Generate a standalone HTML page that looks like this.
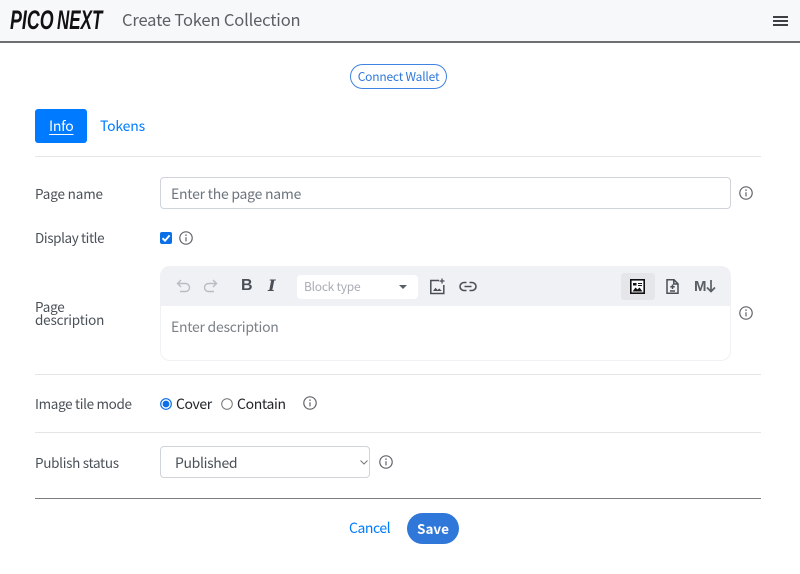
<!DOCTYPE html>
<html><head><meta charset="utf-8"><style>
html,body{margin:0;padding:0;background:#fff}
body{width:800px;height:574px;position:relative;overflow:hidden;font-family:"Noto Sans CJK JP","Liberation Sans",sans-serif;font-size:14px;color:#495057}
.a{position:absolute;white-space:nowrap;line-height:20px}
.hr{position:absolute;left:35px;width:726px;height:1px;background:#e4e5e7}
svg{position:absolute;overflow:visible}
.i{width:14px;height:14px;fill:none;stroke:#5f6368;stroke-width:1.2}
.t{fill:none;stroke:#4a4f57;stroke-width:1.5}
</style></head><body>
<div style="position:absolute;left:0;top:0;width:800px;height:41px;background:#f7f8fa"></div>
<div style="position:absolute;left:0;top:41px;width:800px;height:2px;background:#6d6f72"></div>
<div class="a" style="left:10px;top:8px;font:italic 700 27px/24px 'Liberation Sans',sans-serif;color:#111;transform-origin:0 50%;transform:scaleX(.66)">PICO</div>
<div class="a" style="left:57px;top:8px;font:italic 700 27px/24px 'Liberation Sans',sans-serif;color:#111;transform-origin:0 50%;transform:scaleX(.63)">NEXT</div>
<div class="a" style="left:122px;top:8px;font-size:16.5px;line-height:22px;color:#5b5f64;letter-spacing:-.15px">Create Token Collection</div>
<div style="position:absolute;left:773px;top:16px;width:15px;height:2px;background:#3d3f42"></div>
<div style="position:absolute;left:773px;top:20px;width:15px;height:2px;background:#3d3f42"></div>
<div style="position:absolute;left:773px;top:24px;width:15px;height:2px;background:#3d3f42"></div>

<div class="a" style="left:350px;top:64px;width:95px;height:23px;border:1px solid #3f84e0;border-radius:13px;text-align:center;font-size:12px;line-height:23px;color:#2e77d8;letter-spacing:-.2px">Connect Wallet</div>

<div style="position:absolute;left:35px;top:109px;width:52px;height:34px;background:#007bff;border-radius:3px"></div>
<div class="a" style="left:49px;top:116px;color:#fff;text-decoration:underline;text-underline-offset:3px;letter-spacing:-.25px">Info</div>
<div class="a" style="left:100px;top:116px;color:#007bff;letter-spacing:-.2px">Tokens</div>
<div class="hr" style="top:156px"></div>

<div class="a" style="left:35px;top:183px;font-size:13.5px;letter-spacing:-.15px">Page name</div>
<div style="position:absolute;left:160px;top:177px;width:569px;height:30px;border:1px solid #ced4da;border-radius:4px"></div>
<div class="a" style="left:171px;top:184px;color:#6c757d;letter-spacing:-.25px">Enter the page name</div>
<svg class="i" style="left:739px;top:186px" viewBox="0 0 14 14"><circle cx="7" cy="7" r="6.2"/><path d="M7 6.2V10.4M7 3.4V5"/></svg>

<div class="a" style="left:35px;top:227px;font-size:13.5px;letter-spacing:-.4px">Display title</div>
<svg style="left:160px;top:232px;width:12px;height:12px" viewBox="0 0 12 12"><rect width="12" height="12" rx="2" fill="#0b6fe8"/><path d="M2.5 6.2L5 8.7 9.6 3.4" fill="none" stroke="#fff" stroke-width="1.9"/></svg>
<svg class="i" style="left:179px;top:231px" viewBox="0 0 14 14"><circle cx="7" cy="7" r="6.2"/><path d="M7 6.2V10.4M7 3.4V5"/></svg>

<div class="a" style="left:35px;top:300px;font-size:13.5px;line-height:13px;letter-spacing:-.2px">Page<br>description</div>
<div style="position:absolute;left:160px;top:266px;width:569px;height:93px;border:1px solid #f0f1f4;border-radius:10px"></div>
<div style="position:absolute;left:160px;top:266px;width:571px;height:40px;background:#f0f1f5;border-radius:10px 10px 0 0"></div>
<svg style="left:176px;top:279px;width:15px;height:14px" viewBox="0 0 15 14" fill="none" stroke="#b9bcc2" stroke-width="1.4"><path d="M5 1L1.5 4.5 5 8M1.5 4.5H9.5a3.6 3.6 0 0 1 0 8H4"/></svg>
<svg style="left:203px;top:279px;width:15px;height:14px" viewBox="0 0 15 14" fill="none" stroke="#b9bcc2" stroke-width="1.4"><path d="M10 1L13.5 4.5 10 8M13.5 4.5H5.500a3.600 3.600 0 0 0 0 8H11"/></svg>
<div class="a" style="left:241px;top:276px;font:700 16px/20px 'Liberation Sans',sans-serif;color:#4a4f57">B</div>
<div class="a" style="left:268px;top:276px;font:italic 700 16px/20px 'DejaVu Serif',serif;color:#4a4f57">I</div>
<div style="position:absolute;left:297px;top:275px;width:121px;height:24px;background:#fff;border-radius:4px"></div>
<div class="a" style="left:304px;top:277px;font-size:12px;color:#a9adb3;letter-spacing:-.25px">Block type</div>
<div style="position:absolute;left:399px;top:285px;border:4px solid transparent;border-top-color:#5a5f66;border-bottom:0"></div>
<svg class="t" style="left:429px;top:278px;width:17px;height:17px" viewBox="0 0 17 17"><path d="M10 2.500H1.800V15.500H14.800V7"/><path d="M13 .5V5.500M10.500 3H15.500" stroke-width="1.300"/><path d="M4 13L6.500 9.800 8.500 12 10.200 10.500 12.800 13Z" fill="#4a4f57" stroke="none"/></svg>
<svg class="t" style="left:459px;top:281px;width:18px;height:11px" viewBox="0 0 18 11"><path d="M7.500 1.500H5a4 4 0 0 0 0 8H7.500M10.500 1.500H13a4 4 0 0 1 0 8H10.500M5.500 5.500H12.500" stroke-width="1.600"/></svg>
<div style="position:absolute;left:621px;top:273px;width:34px;height:27px;background:#e4e6ea;border-radius:3px"></div>
<svg style="left:630px;top:279px;width:15px;height:15px" viewBox="0 0 15 15"><rect x=".8" y=".8" width="13.400" height="13.400" fill="#fff" stroke="#111" stroke-width="1.600"/><path d="M3 4H6.500V6.500H3ZM8 4H12V5H8ZM8 6H12V7H8Z" fill="#111"/><path d="M2.500 12.500L5.500 8.500 7.500 10.500 9.500 8.500 12.500 12.500Z" fill="#111"/></svg>
<svg class="t" style="left:666px;top:279px;width:13px;height:15px" viewBox="0 0 13 15" stroke-width="1.300"><path d="M1 .8H8L12 4.800V14.200H1ZM7.800 .8V5H12"/><path d="M6.500 5.500V10M4.300 7.700H8.700M4 12H9"/></svg>
<div class="a" style="left:694px;top:277px;font:700 15px/20px 'Liberation Sans',sans-serif;color:#5a5f66">M</div>
<svg style="left:706px;top:280px;width:10px;height:13px" viewBox="0 0 10 13" fill="none" stroke="#5a5f66" stroke-width="1.700"><path d="M5 0V11.500M1 7.500L5 11.500 9 7.500"/></svg>
<div class="a" style="left:171px;top:317px;color:#7c8187;letter-spacing:-.27px">Enter description</div>
<svg class="i" style="left:739px;top:306px" viewBox="0 0 14 14"><circle cx="7" cy="7" r="6.2"/><path d="M7 6.2V10.4M7 3.4V5"/></svg>
<div class="hr" style="top:374px"></div>

<div class="a" style="left:35px;top:393px;font-size:13.5px;letter-spacing:-.33px">Image tile mode</div>
<svg style="left:160px;top:398px;width:12px;height:12px" viewBox="0 0 12 12"><circle cx="6" cy="6" r="5.300" fill="#fff" stroke="#0b6fe8" stroke-width="1.200"/><circle cx="6" cy="6" r="3.400" fill="#0b6fe8"/></svg>
<div class="a" style="left:176px;top:394px;color:#212529;letter-spacing:-.4px">Cover</div>
<svg style="left:221px;top:398px;width:12px;height:12px" viewBox="0 0 12 12"><circle cx="6" cy="6" r="5.300" fill="#fff" stroke="#767676" stroke-width="1"/></svg>
<div class="a" style="left:237px;top:394px;color:#212529;letter-spacing:-.35px">Contain</div>
<svg class="i" style="left:303px;top:396px" viewBox="0 0 14 14"><circle cx="7" cy="7" r="6.2"/><path d="M7 6.2V10.4M7 3.4V5"/></svg>
<div class="hr" style="top:432px"></div>

<div class="a" style="left:35px;top:452px;font-size:13.5px;letter-spacing:-.3px">Publish status</div>
<div style="position:absolute;left:160px;top:446px;width:208px;height:30px;border:1px solid #ced4da;border-radius:4px"></div>
<div class="a" style="left:175px;top:453px;letter-spacing:-.35px">Published</div>
<svg style="left:360px;top:460px;width:8px;height:5px" viewBox="0 0 8 5" fill="none" stroke="#777" stroke-width="1"><path d="M.5 .5L4 4 7.500 .5"/></svg>
<svg class="i" style="left:379px;top:455px" viewBox="0 0 14 14"><circle cx="7" cy="7" r="6.2"/><path d="M7 6.2V10.4M7 3.4V5"/></svg>

<div style="position:absolute;left:35px;top:498px;width:726px;height:1px;background:#7a7c7f"></div>
<div class="a" style="left:349px;top:518px;color:#007bff;letter-spacing:-.45px">Cancel</div>
<div class="a" style="left:407px;top:513px;width:52px;height:31px;background:#2f77d9;border-radius:16px;text-align:center;color:#fff;font-weight:700;font-size:13.500px;line-height:30px">Save</div>
</body></html>
